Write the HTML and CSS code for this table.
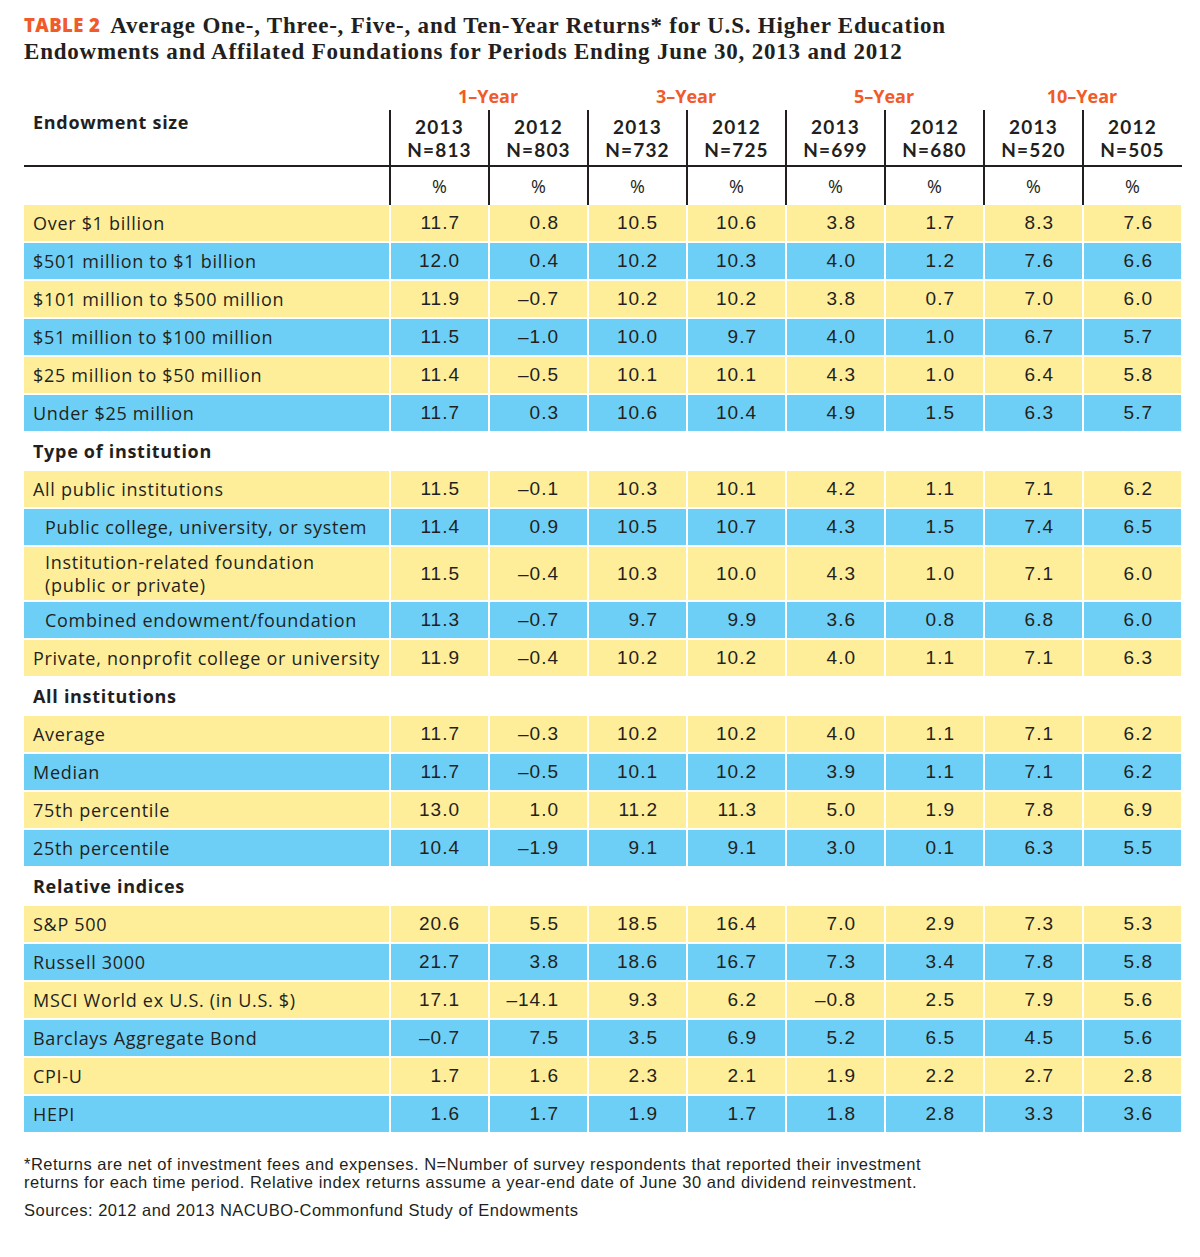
FILE: index.html
```html
<!DOCTYPE html>
<html>
<head>
<meta charset="utf-8">
<link rel="stylesheet" href="styles.css">
</head>
<body>
<div class="page">
  <h1 class="title"><span class="tag">TABLE 2</span>Average One-, Three-, Five-, and Ten-Year Returns* for U.S. Higher Education<br>Endowments and Affilated Foundations for Periods Ending June 30, 2013 and 2012</h1>

  <div class="periods">
    <div></div>
    <div class="period">1–Year</div>
    <div class="period">3–Year</div>
    <div class="period">5–Year</div>
    <div class="period">10–Year</div>
  </div>
  <div class="cols">
    <div class="colhead-label">Endowment size</div>
    <div class="hc"><div>2013</div><div>N=813</div></div>
    <div class="hc"><div>2012</div><div>N=803</div></div>
    <div class="hc"><div>2013</div><div>N=732</div></div>
    <div class="hc"><div>2012</div><div>N=725</div></div>
    <div class="hc"><div>2013</div><div>N=699</div></div>
    <div class="hc"><div>2012</div><div>N=680</div></div>
    <div class="hc"><div>2013</div><div>N=520</div></div>
    <div class="hc"><div>2012</div><div>N=505</div></div>
  </div>
  <div class="units">
    <div></div>
    <div class="uc">%</div><div class="uc">%</div><div class="uc">%</div><div class="uc">%</div>
    <div class="uc">%</div><div class="uc">%</div><div class="uc">%</div><div class="uc">%</div>
  </div>

  <div class="body">
    <div class="row y"><div class="lab">Over $1 billion</div><div class="n">11.7</div><div class="n">0.8</div><div class="n">10.5</div><div class="n">10.6</div><div class="n">3.8</div><div class="n">1.7</div><div class="n">8.3</div><div class="n">7.6</div></div>
    <div class="row b"><div class="lab">$501 million to $1 billion</div><div class="n">12.0</div><div class="n">0.4</div><div class="n">10.2</div><div class="n">10.3</div><div class="n">4.0</div><div class="n">1.2</div><div class="n">7.6</div><div class="n">6.6</div></div>
    <div class="row y"><div class="lab">$101 million to $500 million</div><div class="n">11.9</div><div class="n">–0.7</div><div class="n">10.2</div><div class="n">10.2</div><div class="n">3.8</div><div class="n">0.7</div><div class="n">7.0</div><div class="n">6.0</div></div>
    <div class="row b"><div class="lab">$51 million to $100 million</div><div class="n">11.5</div><div class="n">–1.0</div><div class="n">10.0</div><div class="n">9.7</div><div class="n">4.0</div><div class="n">1.0</div><div class="n">6.7</div><div class="n">5.7</div></div>
    <div class="row y"><div class="lab">$25 million to $50 million</div><div class="n">11.4</div><div class="n">–0.5</div><div class="n">10.1</div><div class="n">10.1</div><div class="n">4.3</div><div class="n">1.0</div><div class="n">6.4</div><div class="n">5.8</div></div>
    <div class="row b"><div class="lab">Under $25 million</div><div class="n">11.7</div><div class="n">0.3</div><div class="n">10.6</div><div class="n">10.4</div><div class="n">4.9</div><div class="n">1.5</div><div class="n">6.3</div><div class="n">5.7</div></div>

    <div class="section">Type of institution</div>
    <div class="row y"><div class="lab">All public institutions</div><div class="n">11.5</div><div class="n">–0.1</div><div class="n">10.3</div><div class="n">10.1</div><div class="n">4.2</div><div class="n">1.1</div><div class="n">7.1</div><div class="n">6.2</div></div>
    <div class="row b"><div class="lab indent">Public college, university, or system</div><div class="n">11.4</div><div class="n">0.9</div><div class="n">10.5</div><div class="n">10.7</div><div class="n">4.3</div><div class="n">1.5</div><div class="n">7.4</div><div class="n">6.5</div></div>
    <div class="row y tall"><div class="lab indent">Institution-related foundation<br>(public or private)</div><div class="n">11.5</div><div class="n">–0.4</div><div class="n">10.3</div><div class="n">10.0</div><div class="n">4.3</div><div class="n">1.0</div><div class="n">7.1</div><div class="n">6.0</div></div>
    <div class="row b"><div class="lab indent">Combined endowment/foundation</div><div class="n">11.3</div><div class="n">–0.7</div><div class="n">9.7</div><div class="n">9.9</div><div class="n">3.6</div><div class="n">0.8</div><div class="n">6.8</div><div class="n">6.0</div></div>
    <div class="row y"><div class="lab">Private, nonprofit college or university</div><div class="n">11.9</div><div class="n">–0.4</div><div class="n">10.2</div><div class="n">10.2</div><div class="n">4.0</div><div class="n">1.1</div><div class="n">7.1</div><div class="n">6.3</div></div>

    <div class="section">All institutions</div>
    <div class="row y"><div class="lab">Average</div><div class="n">11.7</div><div class="n">–0.3</div><div class="n">10.2</div><div class="n">10.2</div><div class="n">4.0</div><div class="n">1.1</div><div class="n">7.1</div><div class="n">6.2</div></div>
    <div class="row b"><div class="lab">Median</div><div class="n">11.7</div><div class="n">–0.5</div><div class="n">10.1</div><div class="n">10.2</div><div class="n">3.9</div><div class="n">1.1</div><div class="n">7.1</div><div class="n">6.2</div></div>
    <div class="row y"><div class="lab">75th percentile</div><div class="n">13.0</div><div class="n">1.0</div><div class="n">11.2</div><div class="n">11.3</div><div class="n">5.0</div><div class="n">1.9</div><div class="n">7.8</div><div class="n">6.9</div></div>
    <div class="row b"><div class="lab">25th percentile</div><div class="n">10.4</div><div class="n">–1.9</div><div class="n">9.1</div><div class="n">9.1</div><div class="n">3.0</div><div class="n">0.1</div><div class="n">6.3</div><div class="n">5.5</div></div>

    <div class="section">Relative indices</div>
    <div class="row y"><div class="lab">S&amp;P 500</div><div class="n">20.6</div><div class="n">5.5</div><div class="n">18.5</div><div class="n">16.4</div><div class="n">7.0</div><div class="n">2.9</div><div class="n">7.3</div><div class="n">5.3</div></div>
    <div class="row b"><div class="lab">Russell 3000</div><div class="n">21.7</div><div class="n">3.8</div><div class="n">18.6</div><div class="n">16.7</div><div class="n">7.3</div><div class="n">3.4</div><div class="n">7.8</div><div class="n">5.8</div></div>
    <div class="row y"><div class="lab">MSCI World ex U.S. (in U.S. $)</div><div class="n">17.1</div><div class="n">–14.1</div><div class="n">9.3</div><div class="n">6.2</div><div class="n">–0.8</div><div class="n">2.5</div><div class="n">7.9</div><div class="n">5.6</div></div>
    <div class="row b"><div class="lab">Barclays Aggregate Bond</div><div class="n">–0.7</div><div class="n">7.5</div><div class="n">3.5</div><div class="n">6.9</div><div class="n">5.2</div><div class="n">6.5</div><div class="n">4.5</div><div class="n">5.6</div></div>
    <div class="row y"><div class="lab">CPI-U</div><div class="n">1.7</div><div class="n">1.6</div><div class="n">2.3</div><div class="n">2.1</div><div class="n">1.9</div><div class="n">2.2</div><div class="n">2.7</div><div class="n">2.8</div></div>
    <div class="row b"><div class="lab">HEPI</div><div class="n">1.6</div><div class="n">1.7</div><div class="n">1.9</div><div class="n">1.7</div><div class="n">1.8</div><div class="n">2.8</div><div class="n">3.3</div><div class="n">3.6</div></div>
  </div>

  <div class="notes">
    <p class="note">*Returns are net of investment fees and expenses. N=Number of survey respondents that reported their investment<br>returns for each time period. Relative index returns assume a year-end date of June 30 and dividend reinvestment.</p>
    <p class="source">Sources: 2012 and 2013 NACUBO-Commonfund Study of Endowments</p>
  </div>
</div>
</body>
</html>
```
FILE: styles.css
```css
html, body {
  margin: 0;
  padding: 0;
  background: #ffffff;
}
body {
  color: #231f20;
  font-family: "Open Sans", "Noto Sans", sans-serif;
}
.page {
  width: 1158px;
  padding: 12px 0 0 24px;
}
.title {
  margin: 0;
  font-family: "Liberation Serif", serif;
  font-weight: bold;
  font-size: 23px;
  letter-spacing: 0.8px;
  line-height: 25.5px;
  color: #231f20;
}
.tag {
  font-family: "Open Sans", sans-serif;
  font-weight: 800;
  font-size: 18.5px;
  letter-spacing: 0.4px;
  color: #f15a29;
  margin-right: 10px;
  vertical-align: 1px;
}
.periods {
  display: grid;
  grid-template-columns: 365px repeat(4, 198px);
  margin-top: 18px;
  height: 28px;
}
.period {
  text-align: center;
  color: #f15a29;
  font-weight: 700;
  font-size: 18px;
  line-height: 28px;
}
.cols {
  display: grid;
  grid-template-columns: 365px repeat(8, 99px);
  border-bottom: 2px solid #231f20;
}
.colhead-label {
  font-weight: 700;
  font-size: 18px;
  letter-spacing: 0.7px;
  line-height: 22px;
  padding: 1px 0 0 9px;
}
.hc, .uc {
  box-sizing: border-box;
  border-left: 2px solid #231f20;
  text-align: center;
}
.hc {
  font-family: "Lato", "Open Sans", sans-serif;
  font-weight: 700;
  font-size: 19px;
  letter-spacing: 1.2px;
  line-height: 23px;
  padding: 5px 0 4px;
}
.hc > div {
  height: 23px;
}
.units {
  display: grid;
  grid-template-columns: 365px repeat(8, 99px);
  height: 38px;
}
.uc {
  font-size: 18px;
  line-height: 38px;
}
.body {
  display: flex;
  flex-direction: column;
  gap: 2px;
}
.row {
  display: grid;
  grid-template-columns: 365px repeat(8, 97px);
  column-gap: 2px;
  height: 36px;
}
.row.tall {
  height: 53px;
}
.row.y > div { background: #ffee99; }
.row.b > div { background: #6dcff6; }
.lab {
  display: flex;
  align-items: center;
  padding: 0 0 0 9px;
  font-size: 18px;
  letter-spacing: 0.7px;
  line-height: 23px;
}
.lab.indent {
  padding-left: 21px;
}
.n {
  text-align: right;
  padding: 0 28px 0 0;
  font-family: "Liberation Sans", sans-serif;
  font-size: 19px;
  letter-spacing: 1px;
  line-height: 36px;
}
.row.tall .n {
  line-height: 53px;
}
.section {
  height: 36px;
  line-height: 36px;
  padding: 0 0 0 9px;
  font-weight: 700;
  font-size: 18px;
  letter-spacing: 0.7px;
}
.notes {
  margin-top: 23px;
  font-family: "Liberation Sans", sans-serif;
  font-size: 16.5px;
  letter-spacing: 0.5px;
}
.note {
  margin: 0;
  line-height: 18px;
}
.source {
  margin: 10px 0 0;
  line-height: 18px;
}
```
